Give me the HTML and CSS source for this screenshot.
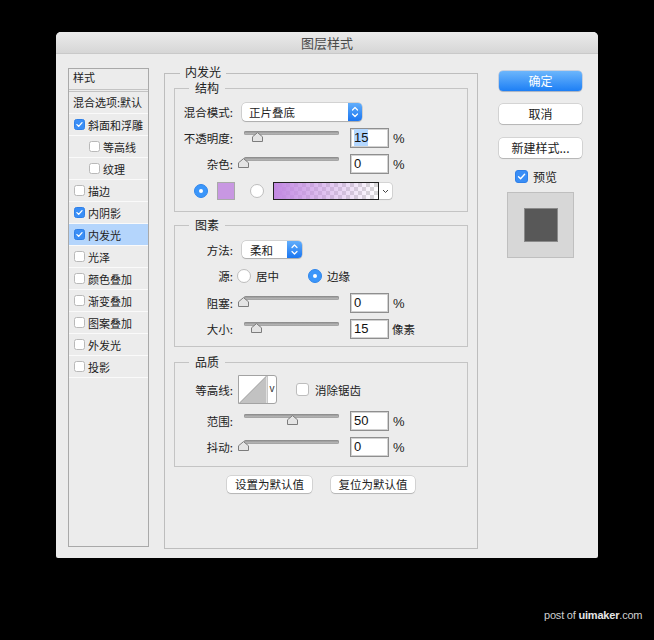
FILE: index.html
```html
<!DOCTYPE html>
<html>
<head>
<meta charset="utf-8">
<link rel="stylesheet" href="styles.css">
</head>
<body>
<div class="window">
  <div class="titlebar">图层样式</div>
  <div class="content">
    <div class="sidebar">
      <div class="side-head">样式</div>
      <div class="side-head2">混合选项:默认</div>
      <div class="side-row"><span class="cb on"><svg viewBox="0 0 11 11"><path d="M2.4 5.6 L4.5 7.8 L8.6 3.2"/></svg></span>斜面和浮雕</div>
      <div class="side-row sub"><span class="cb"></span>等高线</div>
      <div class="side-row sub"><span class="cb"></span>纹理</div>
      <div class="side-row"><span class="cb"></span>描边</div>
      <div class="side-row"><span class="cb on"><svg viewBox="0 0 11 11"><path d="M2.4 5.6 L4.5 7.8 L8.6 3.2"/></svg></span>内阴影</div>
      <div class="side-row active"><span class="cb on"><svg viewBox="0 0 11 11"><path d="M2.4 5.6 L4.5 7.8 L8.6 3.2"/></svg></span>内发光</div>
      <div class="side-row"><span class="cb"></span>光泽</div>
      <div class="side-row"><span class="cb"></span>颜色叠加</div>
      <div class="side-row"><span class="cb"></span>渐变叠加</div>
      <div class="side-row"><span class="cb"></span>图案叠加</div>
      <div class="side-row"><span class="cb"></span>外发光</div>
      <div class="side-row"><span class="cb"></span>投影</div>
    </div>

    <div class="main">
      <div class="legend l-outer">内发光</div>

      <div class="group g-struct">
        <div class="legend">结构</div>
        <div class="row h18">
          <span class="lbl">混合模式:</span>
          <div class="select s-blend"><span class="sel-text">正片叠底</span><span class="stepper"><svg viewBox="0 0 14 18"><path d="M4.5 7 L7 4.5 L9.5 7 M4.5 11 L7 13.5 L9.5 11"/></svg></span></div>
        </div>
        <div class="row h20 mt7">
          <span class="lbl">不透明度:</span>
          <div class="slider"><div class="track"></div><svg class="thumb" style="left:14px" viewBox="0 0 11 10"><path d="M0.5 9.5 L0.5 4.8 L5.5 0.6 L10.5 4.8 L10.5 9.5 Z"/></svg></div>
          <div class="num"><span class="hl">15</span></div><span class="unit">%</span>
        </div>
        <div class="row h20 mt6">
          <span class="lbl">杂色:</span>
          <div class="slider"><div class="track"></div><svg class="thumb" style="left:0px" viewBox="0 0 11 10"><path d="M0.5 9.5 L0.5 4.8 L5.5 0.6 L10.5 4.8 L10.5 9.5 Z"/></svg></div>
          <div class="num">0</div><span class="unit">%</span>
        </div>
        <div class="row h18 mt8 color-row">
          <span class="radio on"></span>
          <span class="swatch"></span>
          <span class="radio r2"></span>
          <span class="gradbar"><span class="gradfill"></span></span>
          <span class="dd"><svg viewBox="0 0 12 16"><path d="M3.5 7 L6 9.5 L8.5 7"/></svg></span>
        </div>
      </div>

      <div class="group g-elem">
        <div class="legend">图素</div>
        <div class="row h17">
          <span class="lbl">方法:</span>
          <div class="select s-method"><span class="sel-text">柔和</span><span class="stepper"><svg viewBox="0 0 15 17"><path d="M5 6.5 L7.5 4 L10 6.5 M5 10.5 L7.5 13 L10 10.5"/></svg></span></div>
        </div>
        <div class="row h16 mt10">
          <span class="lbl">源:</span>
          <span class="radio src1"></span><span class="rtext">居中</span>
          <span class="radio on src2"></span><span class="rtext">边缘</span>
        </div>
        <div class="row h20 mt9">
          <span class="lbl">阻塞:</span>
          <div class="slider"><div class="track"></div><svg class="thumb" style="left:0px" viewBox="0 0 11 10"><path d="M0.5 9.5 L0.5 4.8 L5.5 0.6 L10.5 4.8 L10.5 9.5 Z"/></svg></div>
          <div class="num">0</div><span class="unit">%</span>
        </div>
        <div class="row h20 mt6">
          <span class="lbl">大小:</span>
          <div class="slider"><div class="track"></div><svg class="thumb" style="left:13px" viewBox="0 0 11 10"><path d="M0.5 9.5 L0.5 4.8 L5.5 0.6 L10.5 4.8 L10.5 9.5 Z"/></svg></div>
          <div class="num">15</div><span class="unit cjk">像素</span>
        </div>
      </div>

      <div class="group g-quality">
        <div class="legend">品质</div>
        <div class="row h29">
          <span class="lbl">等高线:</span>
          <div class="contour">
            <svg class="curve" viewBox="0 0 28 28"><polygon points="0,28 28,0 28,28" fill="#c2c2c2"/><line x1="0" y1="28" x2="28" y2="0" stroke="#8c8c8c" stroke-width="0.8"/></svg>
            <span class="cdd">v</span>
          </div>
          <span class="cb big"></span><span class="cbtext">消除锯齿</span>
        </div>
        <div class="row h20 mt7">
          <span class="lbl">范围:</span>
          <div class="slider"><div class="track"></div><svg class="thumb" style="left:49px" viewBox="0 0 11 10"><path d="M0.5 9.5 L0.5 4.8 L5.5 0.6 L10.5 4.8 L10.5 9.5 Z"/></svg></div>
          <div class="num">50</div><span class="unit">%</span>
        </div>
        <div class="row h20 mt6">
          <span class="lbl">抖动:</span>
          <div class="slider"><div class="track"></div><svg class="thumb" style="left:0px" viewBox="0 0 11 10"><path d="M0.5 9.5 L0.5 4.8 L5.5 0.6 L10.5 4.8 L10.5 9.5 Z"/></svg></div>
          <div class="num">0</div><span class="unit">%</span>
        </div>
      </div>

      <div class="defaults">
        <span class="btn small b1">设置为默认值</span>
        <span class="btn small b2">复位为默认值</span>
      </div>
    </div>

    <div class="right">
      <div class="btn primary">确定</div>
      <div class="btn mt13">取消</div>
      <div class="btn mt14">新建样式...</div>
      <div class="preview-row"><span class="cb on big2"><svg viewBox="0 0 13 13"><path d="M3 6.8 L5.4 9.2 L10.2 3.8"/></svg></span><span>预览</span></div>
      <div class="preview"><div class="preview-sq"></div></div>
    </div>
  </div>
</div>
<div class="watermark">post of <b>uimaker</b>.com</div>
</body>
</html>
```

FILE: styles.css
```css
html, body {
  margin: 0;
  padding: 0;
}
body {
  background: #000;
  width: 654px;
  height: 640px;
  overflow: hidden;
  font-family: "Liberation Sans", "Noto Sans CJK SC", sans-serif;
  font-size: 12px;
  color: #222;
}
.window {
  margin: 32px 0 0 56px;
  width: 542px;
  height: 526px;
  background: #ececec;
  border-radius: 5px 5px 2px 2px;
  overflow: hidden;
}
.titlebar {
  height: 21px;
  line-height: 22px;
  border-bottom: 1px solid #c9c9c9;
  background: linear-gradient(#ebebeb, #d6d6d6);
  text-align: center;
  font-family: "Noto Sans CJK SC", sans-serif;
  font-size: 13px;
  color: #4a4a4a;
}
.content {
  display: flex;
  align-items: flex-start;
  padding: 14px 0 0 12px;
}

/* sidebar */
.sidebar {
  box-sizing: border-box;
  width: 81px;
  height: 479px;
  border: 1px solid #a9a9a9;
  font-family: "Noto Sans CJK SC", sans-serif;
  font-size: 11px;
  color: #222;
}
.side-head {
  height: 20px;
  line-height: 16px;
  padding-left: 4px;
  border-bottom: 3px double #c3c3c3;
}
.side-head2 {
  height: 21px;
  line-height: 20px;
  padding-left: 4px;
  border-bottom: 1px solid #fafafa;
  white-space: nowrap;
}
.side-row {
  height: 21px;
  border-bottom: 1px solid #fafafa;
  display: flex;
  align-items: center;
  padding-left: 5px;
  white-space: nowrap;
}
.side-row.sub {
  padding-left: 20px;
}
.side-row.active {
  background: #b4d5fc;
}
.cb {
  box-sizing: border-box;
  width: 11px;
  height: 11px;
  border-radius: 2.5px;
  background: #fff;
  border: 1px solid #b9b9b9;
  margin-right: 3px;
  flex: none;
  display: inline-flex;
}
.cb.on {
  background: #3a8ef6;
  border-color: #2f80e8;
}
.cb svg {
  width: 100%;
  height: 100%;
}
.cb svg path {
  fill: none;
  stroke: #fff;
  stroke-width: 1.6;
  stroke-linecap: round;
  stroke-linejoin: round;
}

/* main */
.main {
  box-sizing: border-box;
  width: 314px;
  height: 476px;
  margin: 5px 0 0 15px;
  border: 1px solid #bdbdbd;
  padding: 0 9px;
}
.legend {
  display: block;
  width: fit-content;
  height: 12px;
  line-height: 12px;
  margin: -7px 0 -5px 14px;
  padding: 0 6px;
  background: #ececec;
  font-family: "Noto Sans CJK SC", sans-serif;
  font-size: 12px;
  color: #222;
}
.legend.l-outer {
  margin: -8px 0 -4px 6px;
  padding: 0 5px;
}
.group {
  border: 1px solid #c4c4c4;
}
.g-struct {
  margin-top: 14px;
  padding-bottom: 11px;
}
.g-struct .legend { margin-bottom: 9px; }
.g-elem {
  margin-top: 13px;
  padding-bottom: 7px;
}
.g-elem .legend { margin-bottom: 10px; }
.g-quality {
  margin-top: 15px;
  padding-bottom: 9px;
}
.g-quality .legend { margin-bottom: 7px; }
.row {
  display: flex;
  align-items: center;
}
.h16 { height: 16px; }
.h17 { height: 17px; }
.h18 { height: 18px; }
.h20 { height: 20px; }
.h29 { height: 29px; }
.mt6 { margin-top: 6px; }
.mt7 { margin-top: 7px; }
.mt8 { margin-top: 8px; }
.mt9 { margin-top: 9px; }
.mt10 { margin-top: 10px; }
.mt13 { margin-top: 13px; }
.mt14 { margin-top: 14px; }
.lbl {
  width: 58px;
  flex: none;
  text-align: right;
  font-family: "Noto Sans CJK SC", sans-serif;
  font-size: 11.5px;
  color: #222;
  white-space: nowrap;
}

/* select */
.select {
  margin-left: 9px;
  height: 100%;
  box-sizing: border-box;
  display: flex;
  align-items: center;
  justify-content: space-between;
  background: #fff;
  border-radius: 4px;
  box-shadow: 0 0 0 0.5px rgba(0, 0, 0, 0.22), 0 1px 1px rgba(0, 0, 0, 0.18);
  font-family: "Noto Sans CJK SC", sans-serif;
  font-size: 11.5px;
}
.s-blend { width: 120px; }
.s-method { width: 60px; }
.sel-text {
  padding-left: 7px;
  color: #222;
}
.s-method .sel-text { padding-left: 8px; }
.stepper {
  width: 14px;
  height: 100%;
  border-radius: 0 4px 4px 0;
  background: linear-gradient(#62aefb, #1b76f1);
  display: flex;
}
.s-method .stepper { width: 15px; }
.stepper svg {
  width: 100%;
  height: 100%;
}
.stepper path {
  fill: none;
  stroke: #fff;
  stroke-width: 1.2;
  stroke-linecap: round;
  stroke-linejoin: round;
}

/* slider */
.slider {
  position: relative;
  width: 106px;
  height: 20px;
  margin-left: 5px;
  flex: none;
}
.track {
  margin: 3px 0 0 6px;
  width: 95px;
  height: 4px;
  border-radius: 2px;
  background: linear-gradient(#8a8a8a, #c9c9c9);
  box-shadow: inset 0 0 0 0.5px #8c8c8c;
}
.thumb {
  position: absolute;
  top: 4px;
  width: 11px;
  height: 10px;
}
.thumb path {
  fill: #e4e4e4;
  stroke: #7c7c7c;
  stroke-width: 1;
  stroke-linejoin: round;
}
.num {
  box-sizing: border-box;
  width: 39px;
  height: 20px;
  margin-left: 6px;
  background: #fff;
  border: 1px solid #8f8f8f;
  box-shadow: inset 0 0 0 1px #d2d2d2;
  padding-left: 3px;
  font-family: "Liberation Sans", sans-serif;
  font-size: 13px;
  line-height: 18px;
  color: #111;
  flex: none;
}
.hl {
  background: #b3d7ff;
  padding: 1px 0;
}
.unit {
  margin-left: 4px;
  font-family: "Liberation Sans", sans-serif;
  font-size: 13px;
  color: #222;
}
.unit.cjk {
  font-family: "Noto Sans CJK SC", sans-serif;
  font-size: 11.5px;
  margin-left: 3px;
}

/* color row */
.radio {
  box-sizing: border-box;
  width: 14px;
  height: 14px;
  border-radius: 50%;
  background: #fff;
  border: 1px solid #bdbdbd;
  flex: none;
  display: inline-flex;
  align-items: center;
  justify-content: center;
}
.radio.on {
  background: #3b96fa;
  border-color: #2f86ec;
}
.radio.on::after {
  content: "";
  width: 4px;
  height: 4px;
  border-radius: 50%;
  background: #fff;
}
.color-row .radio.on {
  margin-left: 19px;
}
.swatch {
  box-sizing: border-box;
  width: 18px;
  height: 18px;
  margin-left: 9px;
  background: #c897e2;
  border: 1px solid #a9a9a9;
}
.radio.r2 {
  margin-left: 15px;
}
.gradbar {
  box-sizing: border-box;
  width: 106px;
  height: 18px;
  margin-left: 9px;
  border: 1px solid #222;
  background: conic-gradient(#d9d9d9 25%, #fff 0 50%, #d9d9d9 0 75%, #fff 0) 0 0 / 8px 8px;
  display: flex;
}
.gradfill {
  flex: 1;
  background: linear-gradient(to right, rgba(194, 136, 226, 1), rgba(194, 136, 226, 0));
}
.dd {
  box-sizing: border-box;
  width: 13px;
  height: 16px;
  background: #fff;
  border-radius: 0 3px 3px 0;
  box-shadow: 0 0 0 0.5px rgba(0, 0, 0, 0.2), 0 1px 1px rgba(0, 0, 0, 0.12);
  display: flex;
}
.dd svg {
  width: 100%;
  height: 100%;
}
.dd path {
  fill: none;
  stroke: #444;
  stroke-width: 1;
}

/* source radios */
.src1 { margin-left: 4px; }
.src2 { margin-left: 29px; }
.rtext {
  margin-left: 5px;
  font-family: "Noto Sans CJK SC", sans-serif;
  font-size: 11.5px;
}

/* contour */
.contour {
  box-sizing: border-box;
  margin-left: 5px;
  width: 39px;
  height: 29px;
  display: flex;
  background: #fff;
  border: 1px solid #a3a3a3;
  border-radius: 0 3px 3px 0;
}
.curve {
  width: 28px;
  height: 27px;
  border-right: 1px solid #c8c8c8;
}
.cdd {
  flex: 1;
  text-align: center;
  font-family: "Liberation Sans", sans-serif;
  font-size: 10px;
  line-height: 25px;
  color: #333;
}
.cb.big {
  width: 13px;
  height: 13px;
  margin-left: 19px;
  margin-right: 6px;
  border-radius: 3px;
  border-color: #bdbdbd;
}
.cbtext {
  font-family: "Noto Sans CJK SC", sans-serif;
  font-size: 11.5px;
}

/* default buttons */
.defaults {
  margin-top: 9px;
  display: flex;
  justify-content: center;
  gap: 19px;
}
.btn {
  box-sizing: border-box;
  background: #fff;
  border-radius: 4px;
  box-shadow: 0 0 0 0.5px rgba(0, 0, 0, 0.2), 0 1px 1px rgba(0, 0, 0, 0.15);
  text-align: center;
  font-family: "Noto Sans CJK SC", sans-serif;
  font-size: 12px;
  color: #222;
  height: 20px;
  line-height: 20px;
}
.btn.small {
  height: 17px;
  line-height: 17px;
  font-size: 11.5px;
}
.b1 { width: 85px; }
.b2 { width: 84px; }

/* right */
.right {
  width: 83px;
  margin: 3px 0 0 21px;
  display: flex;
  flex-direction: column;
}
.btn.primary {
  background: linear-gradient(#6cb6fc, #1d7ff5);
  color: #fff;
  box-shadow: 0 0 0 0.5px rgba(0, 60, 160, 0.3), 0 1px 1px rgba(0, 0, 0, 0.15);
}
.preview-row {
  margin-top: 12px;
  height: 13px;
  display: flex;
  align-items: center;
  padding-left: 16px;
  font-family: "Noto Sans CJK SC", sans-serif;
  font-size: 12px;
}
.cb.big2 {
  width: 13px;
  height: 13px;
  border-radius: 3px;
  margin-right: 5px;
}
.preview {
  box-sizing: border-box;
  margin: 9px 0 0 8px;
  width: 67px;
  height: 66px;
  background: #d7d7d7;
  border: 1px solid #bfbfbf;
  display: flex;
  align-items: center;
  justify-content: center;
}
.preview-sq {
  width: 32px;
  height: 32px;
  background: #585858;
  box-shadow: 0 0 0 1px #8a8a8a;
}

.watermark {
  margin: 51px 0 0 544px;
  font-family: "Liberation Sans", sans-serif;
  font-size: 11px;
  line-height: 13px;
  color: #cfcfcf;
  white-space: nowrap;
  letter-spacing: -0.2px;
}
.watermark b {
  font-weight: bold;
  color: #e6e6e6;
}
```
